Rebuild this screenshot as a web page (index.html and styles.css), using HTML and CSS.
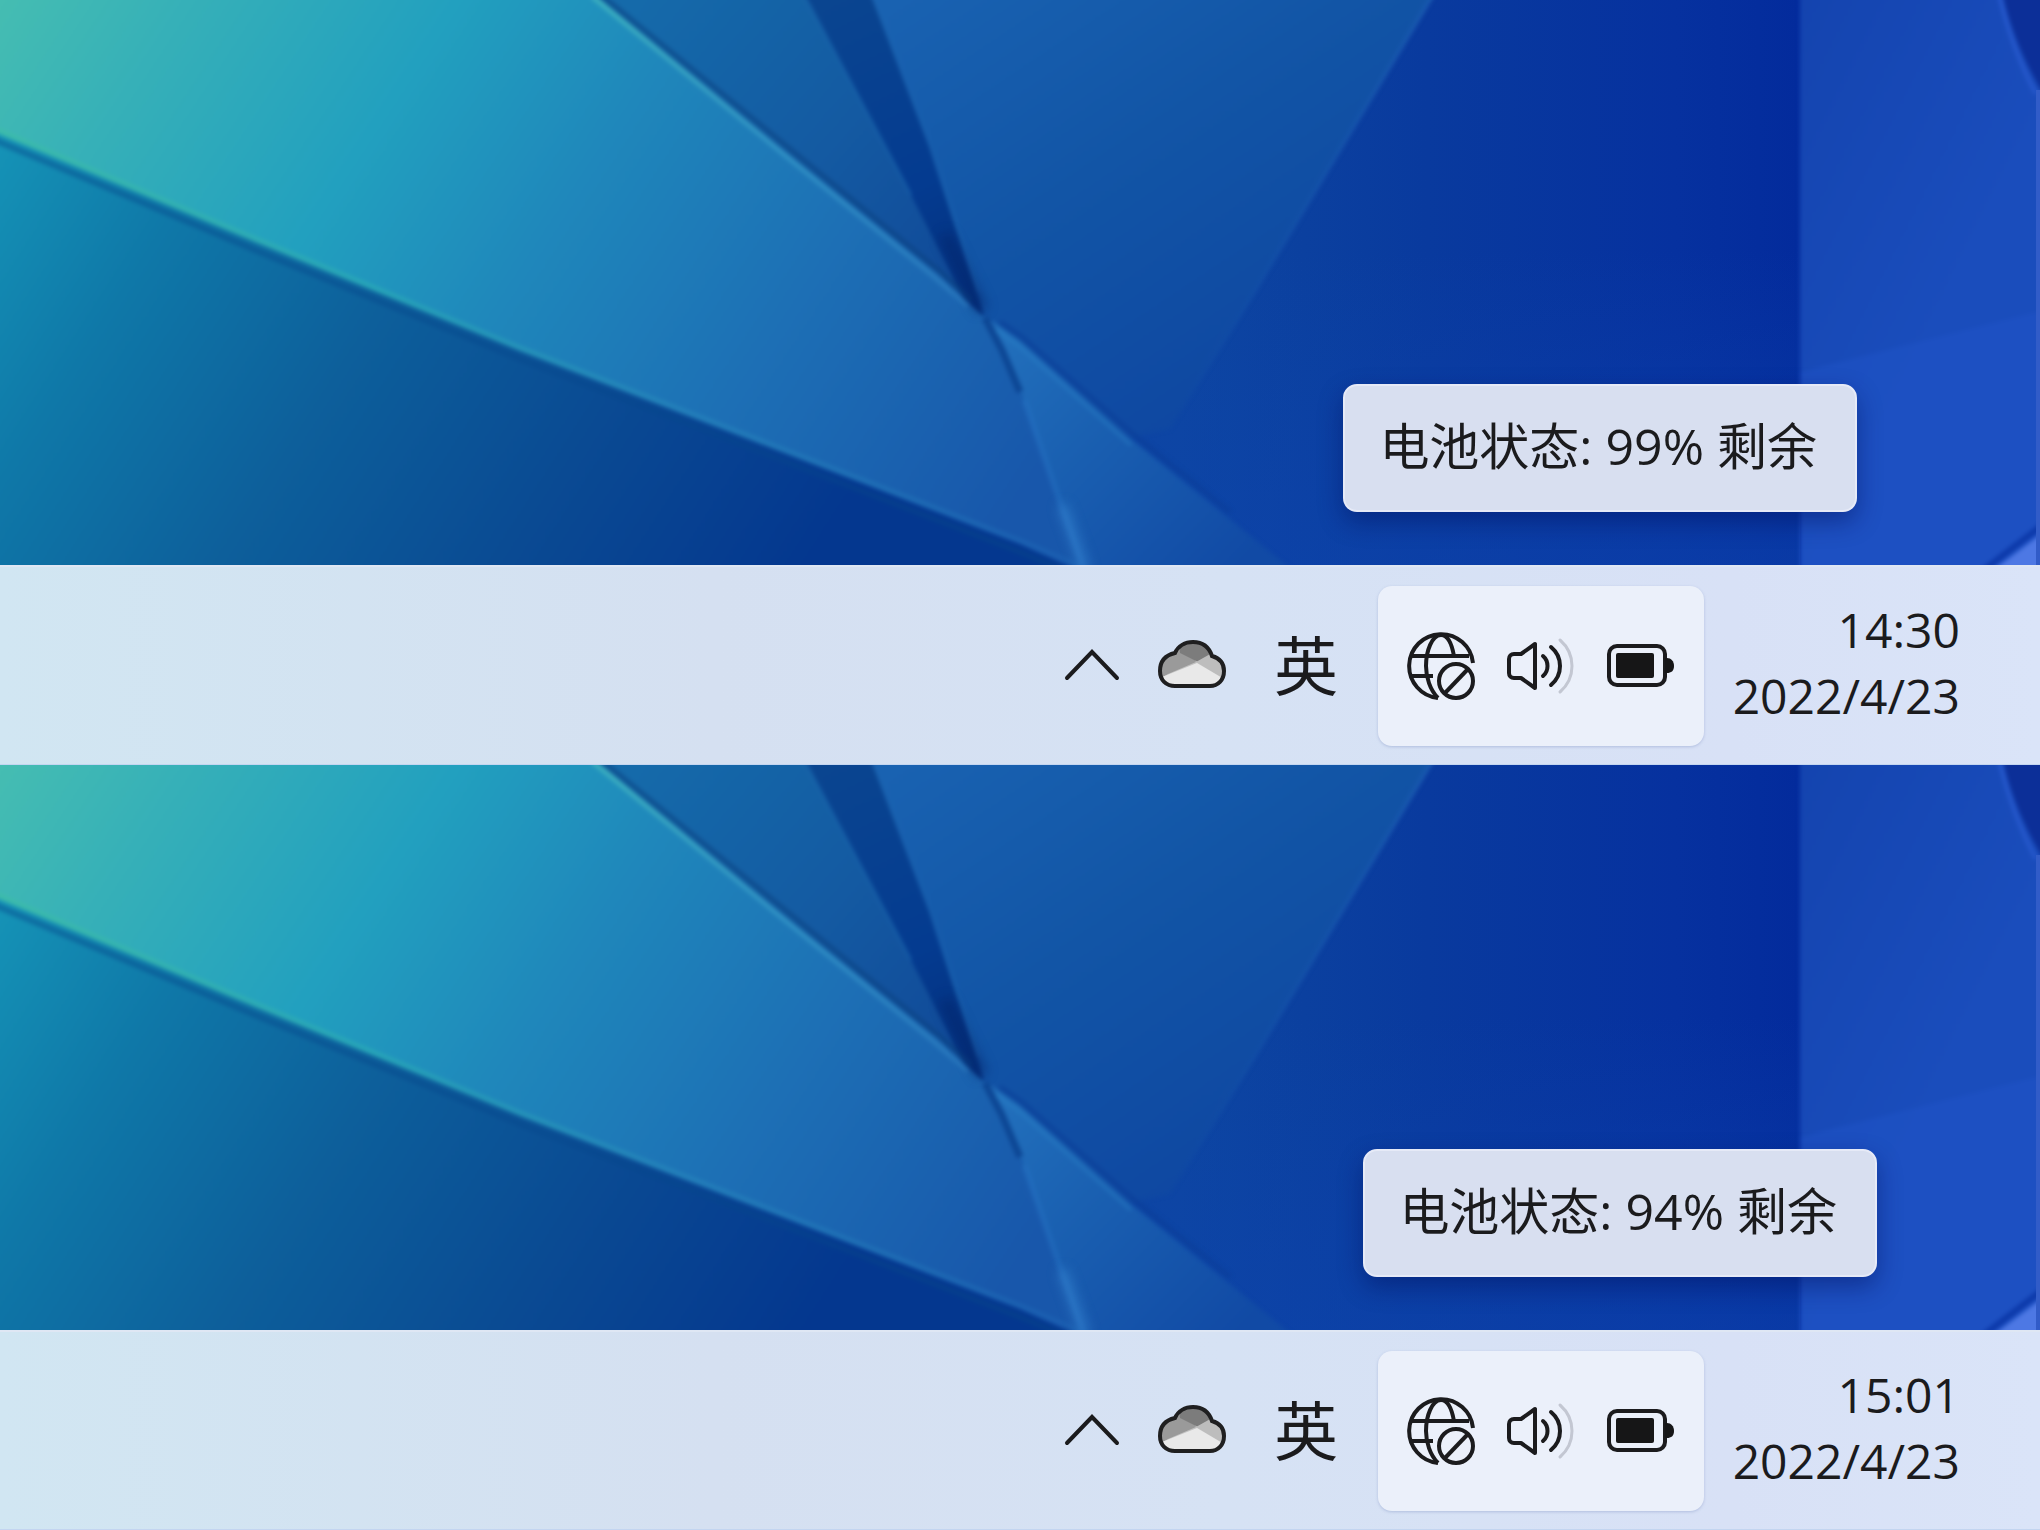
FILE: index.html
```html
<!DOCTYPE html>
<html lang="zh-CN">
<head>
  <meta charset="UTF-8">
  <meta name="viewport" content="width=device-width, initial-scale=1.0">
  <title>电池状态</title>
  <link rel="stylesheet" href="styles.css">
</head>
<body>

  <!-- Shared drawings -->
  <svg class="sprites" width="0" height="0" aria-hidden="true">
    <defs>
      <linearGradient id="ribbon" gradientUnits="userSpaceOnUse" x1="0" y1="0" x2="940" y2="620">
        <stop offset="0" stop-color="#45bdb2"/>
        <stop offset="0.14" stop-color="#36b0b8"/>
        <stop offset="0.34" stop-color="#22a0bf"/>
        <stop offset="0.52" stop-color="#1f87bb"/>
        <stop offset="0.74" stop-color="#1d6fb5"/>
        <stop offset="1" stop-color="#1857ab"/>
      </linearGradient>
      <linearGradient id="ground" gradientUnits="userSpaceOnUse" x1="0" y1="150" x2="760" y2="640">
        <stop offset="0" stop-color="#1592b6"/>
        <stop offset="0.2" stop-color="#0f78a8"/>
        <stop offset="0.45" stop-color="#0d5f9b"/>
        <stop offset="0.72" stop-color="#0a4a93"/>
        <stop offset="1" stop-color="#04378f"/>
      </linearGradient>
      <linearGradient id="leaf" gradientUnits="userSpaceOnUse" x1="640" y1="0" x2="940" y2="260">
        <stop offset="0" stop-color="#156aaa"/>
        <stop offset="0.6" stop-color="#145aa2"/>
        <stop offset="1" stop-color="#114c9a"/>
      </linearGradient>
      <linearGradient id="stripe" gradientUnits="userSpaceOnUse" x1="830" y1="0" x2="980" y2="310">
        <stop offset="0" stop-color="#0a4590"/>
        <stop offset="0.6" stop-color="#043b90"/>
        <stop offset="1" stop-color="#042f7c"/>
      </linearGradient>
      <linearGradient id="fan" gradientUnits="userSpaceOnUse" x1="900" y1="0" x2="1180" y2="420">
        <stop offset="0" stop-color="#1962b1"/>
        <stop offset="0.5" stop-color="#1255a6"/>
        <stop offset="1" stop-color="#0f48a2"/>
      </linearGradient>
      <linearGradient id="deep" gradientUnits="userSpaceOnUse" x1="1180" y1="0" x2="1800" y2="0">
        <stop offset="0" stop-color="#0d46a0"/>
        <stop offset="0.4" stop-color="#093a9e"/>
        <stop offset="0.8" stop-color="#06319f"/>
        <stop offset="1" stop-color="#032b9c"/>
      </linearGradient>
      <linearGradient id="deepGlow" gradientUnits="userSpaceOnUse" x1="0" y1="250" x2="0" y2="565">
        <stop offset="0" stop-color="#0d43ac" stop-opacity="0"/>
        <stop offset="1" stop-color="#0d43ac" stop-opacity="0.6"/>
      </linearGradient>
      <linearGradient id="edge" gradientUnits="userSpaceOnUse" x1="1800" y1="0" x2="2040" y2="120">
        <stop offset="0" stop-color="#1444af"/>
        <stop offset="1" stop-color="#1a4dbc"/>
      </linearGradient>
      <linearGradient id="tail" gradientUnits="userSpaceOnUse" x1="1000" y1="330" x2="1240" y2="565">
        <stop offset="0" stop-color="#2270bc"/>
        <stop offset="0.4" stop-color="#1a60b1"/>
        <stop offset="1" stop-color="#114aa5"/>
      </linearGradient>
      <linearGradient id="rimLow" gradientUnits="userSpaceOnUse" x1="0" y1="0" x2="1060" y2="0">
        <stop offset="0" stop-color="#3dbcaa"/>
        <stop offset="0.35" stop-color="#28a8b8"/>
        <stop offset="0.65" stop-color="#2481bb"/>
        <stop offset="1" stop-color="#1b5fb1"/>
      </linearGradient>
      <linearGradient id="rimHigh" gradientUnits="userSpaceOnUse" x1="586" y1="0" x2="976" y2="300">
        <stop offset="0" stop-color="#3bb0bf"/>
        <stop offset="0.5" stop-color="#2f90c4"/>
        <stop offset="1" stop-color="#2673bb"/>
      </linearGradient>
      <linearGradient id="crease" gradientUnits="userSpaceOnUse" x1="0" y1="0" x2="0" y2="420">
        <stop offset="0" stop-color="#1f61b6" stop-opacity="0.7"/>
        <stop offset="1" stop-color="#1f61b6" stop-opacity="0"/>
      </linearGradient>
      <filter id="soft" x="-5%" y="-5%" width="110%" height="110%" color-interpolation-filters="sRGB">
        <feGaussianBlur stdDeviation="2"/>
      </filter>
      <filter id="softer" x="-100%" y="-40%" width="300%" height="180%" color-interpolation-filters="sRGB">
        <feGaussianBlur stdDeviation="6"/>
      </filter>
    </defs>

    <symbol id="wallpaper" viewBox="0 0 2040 565" preserveAspectRatio="none">
      <rect width="2040" height="565" fill="url(#deep)"/>
      <rect x="1100" width="700" height="565" fill="url(#deepGlow)"/>
      <g filter="url(#soft)">
        <path d="M860-20H1442L1254 293L1170 429L1120 440L976 310Z" fill="url(#fan)"/>
        <path d="M1442-20L1254 293L1170 429" fill="none" stroke="url(#crease)" stroke-width="4"/>
        <path d="M1800-20H2060V590H1800Z" fill="url(#edge)"/>
        <path d="M1800 372L2060 306V590H1800Z" fill="#2053c8" fill-opacity="0.5"/>
        <path d="M2000-20H2060V110L2040 88C2024 60 2012 32 2004 0Z" fill="#0c2f98"/>
        <path d="M1999-6C2008 32 2020 64 2036 94" fill="none" stroke="#2658cc" stroke-width="4"/>
        <path d="M1996 568L2060 520V590H1996Z" fill="#4d78e4"/>
        <path d="M1984 570L2044 524" fill="none" stroke="#0c39aa" stroke-width="6"/>
        <path d="M574-20H815L911 195L976 310L937 280L781 158Z" fill="url(#leaf)"/>
        <path d="M797-20H866L930 146L984 316L968 306L911 195L807 0Z" fill="url(#stripe)"/>
        <path d="M797-20L807 0L911 195" fill="none" stroke="#1c69b1" stroke-width="3" stroke-opacity="0.5"/>
        <path d="M866-20L930 146L978 292" fill="none" stroke="#1f6cb8" stroke-width="3" stroke-opacity="0.5"/>
        <path d="M-20 120L260 244L520 351L1020 544L1090 575V600H-20Z" fill="url(#ground)"/>
        <path d="M-20-20H572L596 0L781 149L937 273L985 318L1020 390L1088 575L1020 544L520 351L260 244L-20 126Z" fill="url(#ribbon)"/>
        <path d="M985 316L1020 341L1131 439L1305 580H1088L1046 463L1020 390Z" fill="url(#tail)"/>
        <path d="M602-4L785 145L937 269L972 300" fill="none" stroke="#0b4282" stroke-width="5" stroke-opacity="0.6"/>
        <path d="M592-4L780 151L932 275L968 306" fill="none" stroke="url(#rimHigh)" stroke-width="5"/>
        <path d="M-10 138L260 252L520 359L1020 552L1080 577" fill="none" stroke="#06478c" stroke-width="6" stroke-opacity="0.45"/>
        <path d="M-10 127L260 241L520 348L1020 541L1080 566" fill="none" stroke="url(#rimLow)" stroke-width="5"/>
        <path d="M985 318L1002 350L1020 392" fill="none" stroke="#0d4795" stroke-width="7"/>
        <path d="M996 330L1020 347L1131 445" fill="none" stroke="#2b82c8" stroke-width="4" stroke-opacity="0.4"/>
        <path d="M1000 322L1022 337L1134 435L1230 512" fill="none" stroke="#0a3c96" stroke-width="5" stroke-opacity="0.5"/>
        <path d="M1024 400L1046 463L1084 570" fill="none" stroke="#2a7ccb" stroke-width="6" stroke-opacity="0.35"/>
      </g>
      <path d="M1062 505L1086 570" fill="none" stroke="#3a8ad6" stroke-width="9" stroke-opacity="0.6" filter="url(#softer)"/>
      <path d="M945 235L982 310" fill="none" stroke="#03256a" stroke-width="12" stroke-opacity="0.6" filter="url(#softer)"/>
      <rect x="2036" y="90" width="4" height="475" fill="#315cc8"/>
    </symbol>

    <symbol id="chevron" viewBox="0 0 60 60">
      <path d="M5 42L30 16L55 42" fill="none" stroke="#1b1b1d" stroke-width="4" stroke-linecap="round"/>
    </symbol>

    <symbol id="cloud" viewBox="0 0 68 68">
      <clipPath id="cloudShape">
        <path d="M17 54C8 54 2 48 2 39C2 29 8 23 17 21C20 14 27 10 35 10C44 10 51 15 54 24C61 26 66 31 66 39C66 48 60 54 52 54Z"/>
      </clipPath>
      <g clip-path="url(#cloudShape)">
        <rect width="68" height="68" fill="#c3c3c3"/>
        <path d="M0 0H20L38 30L10 42L0 48Z" fill="#9a9a9a"/>
        <path d="M22 21L40 30L54 24V0H20Z" fill="#7c7c7c"/>
        <path d="M38 30L54 21L68 30V48L60 43Z" fill="#bdbdbd"/>
        <path d="M4 45L39 31L66 47V58H4Z" fill="#e9e9e9"/>
      </g>
      <path d="M17 54C8 54 2 48 2 39C2 29 8 23 17 21C20 14 27 10 35 10C44 10 51 15 54 24C61 26 66 31 66 39C66 48 60 54 52 54Z" fill="none" stroke="#1f1f20" stroke-width="4"/>
    </symbol>

    <symbol id="globe" viewBox="0 0 68 68">
      <g fill="none" stroke="#1b1b1d" stroke-width="4">
        <path d="M66 31A32 32 0 1 0 31 66"/>
        <path d="M5 24H62M3 44H26"/>
        <path d="M31 66C23 58 19 45 19 34C19 19 25 3 34 3C41 3 45 13 47 24"/>
        <circle cx="49" cy="49" r="17"/>
        <path d="M38 61L61 37"/>
      </g>
    </symbol>

    <symbol id="speaker" viewBox="0 0 68 68">
      <g fill="none" stroke="#1b1b1d" stroke-width="4" stroke-linecap="round" stroke-linejoin="round">
        <path d="M28 12V56L14 46H7C4 46 2 44 2 41V27C2 24 4 22 7 22H14Z"/>
        <path d="M36 24C42 29 42 39 36 44"/>
        <path d="M44 15C56 25 56 43 44 53"/>
        <path d="M53 8C69 22 69 46 53 60" stroke="#c3c7d2" stroke-width="3"/>
      </g>
    </symbol>

    <symbol id="battery" viewBox="0 0 68 68">
      <rect x="2" y="14" width="56" height="39" rx="8" fill="none" stroke="#1b1b1d" stroke-width="4"/>
      <rect x="9" y="21" width="38" height="25" rx="2" fill="#161617"/>
      <path d="M58 26H60C64 26 67 29 67 34C67 39 64 41 60 41H58Z" fill="#161617"/>
    </symbol>
  </svg>

  <main class="screens">

    <section class="screen">
      <div class="desktop">
        <svg class="wallpaper" aria-hidden="true"><use href="#wallpaper"/></svg>
        <div class="tooltip" role="tooltip">电池状态: 99% 剩余</div>
      </div>
      <div class="taskbar">
        <button class="tray-button" type="button" aria-label="显示隐藏的图标">
          <svg class="icon-small"><use href="#chevron"/></svg>
        </button>
        <button class="tray-button weather" type="button" aria-label="OneDrive">
          <svg class="icon"><use href="#cloud"/></svg>
        </button>
        <button class="tray-button language" type="button">英</button>
        <button class="quick-settings" type="button" aria-label="网络、音量、电池">
          <svg class="icon"><use href="#globe"/></svg>
          <svg class="icon"><use href="#speaker"/></svg>
          <svg class="icon"><use href="#battery"/></svg>
        </button>
        <button class="clock" type="button">
          <span>14:30</span>
          <span>2022/4/23</span>
        </button>
      </div>
    </section>

    <section class="screen">
      <div class="desktop">
        <svg class="wallpaper" aria-hidden="true"><use href="#wallpaper"/></svg>
        <div class="tooltip tooltip-near" role="tooltip">电池状态: 94% 剩余</div>
      </div>
      <div class="taskbar">
        <button class="tray-button" type="button" aria-label="显示隐藏的图标">
          <svg class="icon-small"><use href="#chevron"/></svg>
        </button>
        <button class="tray-button weather" type="button" aria-label="OneDrive">
          <svg class="icon"><use href="#cloud"/></svg>
        </button>
        <button class="tray-button language" type="button">英</button>
        <button class="quick-settings" type="button" aria-label="网络、音量、电池">
          <svg class="icon"><use href="#globe"/></svg>
          <svg class="icon"><use href="#speaker"/></svg>
          <svg class="icon"><use href="#battery"/></svg>
        </button>
        <button class="clock" type="button">
          <span>15:01</span>
          <span>2022/4/23</span>
        </button>
      </div>
    </section>

  </main>

</body>
</html>
```

FILE: styles.css
```css
* {
  box-sizing: border-box;
}

body {
  margin: 0;
  font-family: "Open Sans", "Noto Sans CJK SC", sans-serif;
  color: #1b1b1d;
}

button {
  margin: 0;
  padding: 0;
  border: none;
  background: none;
  font: inherit;
  color: inherit;
  cursor: pointer;
}

.sprites {
  position: absolute;
}

.screens {
  display: grid;
  grid-template-rows: 1fr 1fr;
  min-height: 100vh;
}

.screen {
  display: flex;
  flex-direction: column;
}

/* Desktop */
.desktop {
  position: relative;
  flex: 1;
  min-height: 240px;
  overflow: hidden;
  background-color: #093a9e;
}

.wallpaper {
  position: absolute;
  width: 100%;
  height: 100%;
}

.tooltip {
  position: absolute;
  right: 183px;
  bottom: 53px;
  padding: 26px 38px 30px 34px;
  border: 2px solid #e6eaf7;
  border-radius: 14px;
  background-color: #d8dff0;
  box-shadow: 0 10px 24px rgba(0, 16, 90, 0.45);
  font-size: 50px;
  line-height: 68px;
  white-space: nowrap;
}

.tooltip-near {
  right: 163px;
}

/* Taskbar */
.taskbar {
  display: flex;
  align-items: center;
  justify-content: flex-end;
  height: 200px;
  padding-right: 80px;
  border-top: 2px solid #dfe7f4;
  border-bottom: 1px solid #c3d5f0;
  background: linear-gradient(to right, #d1e6f2, #d5e0f1 35%, #d6e2f4 60%, #d8e1f6 85%, #dae4f8);
}

.icon,
.icon-small {
  display: block;
  width: 68px;
  height: 68px;
}

.icon-small {
  width: 60px;
  height: 60px;
}

.weather {
  margin: 0 48px 0 36px;
}

.language {
  margin-right: 40px;
  font-size: 64px;
  line-height: 80px;
}

.quick-settings {
  display: flex;
  align-items: center;
  gap: 32px;
  height: 160px;
  padding: 0 29px;
  border-radius: 14px;
  background-color: #ebf0fa;
  box-shadow: 0 1px 3px rgba(120, 140, 190, 0.4);
}

.clock {
  display: flex;
  flex-direction: column;
  align-items: flex-end;
  min-width: 256px;
  padding-bottom: 6px;
  font-size: 48px;
  line-height: 66px;
}
```
